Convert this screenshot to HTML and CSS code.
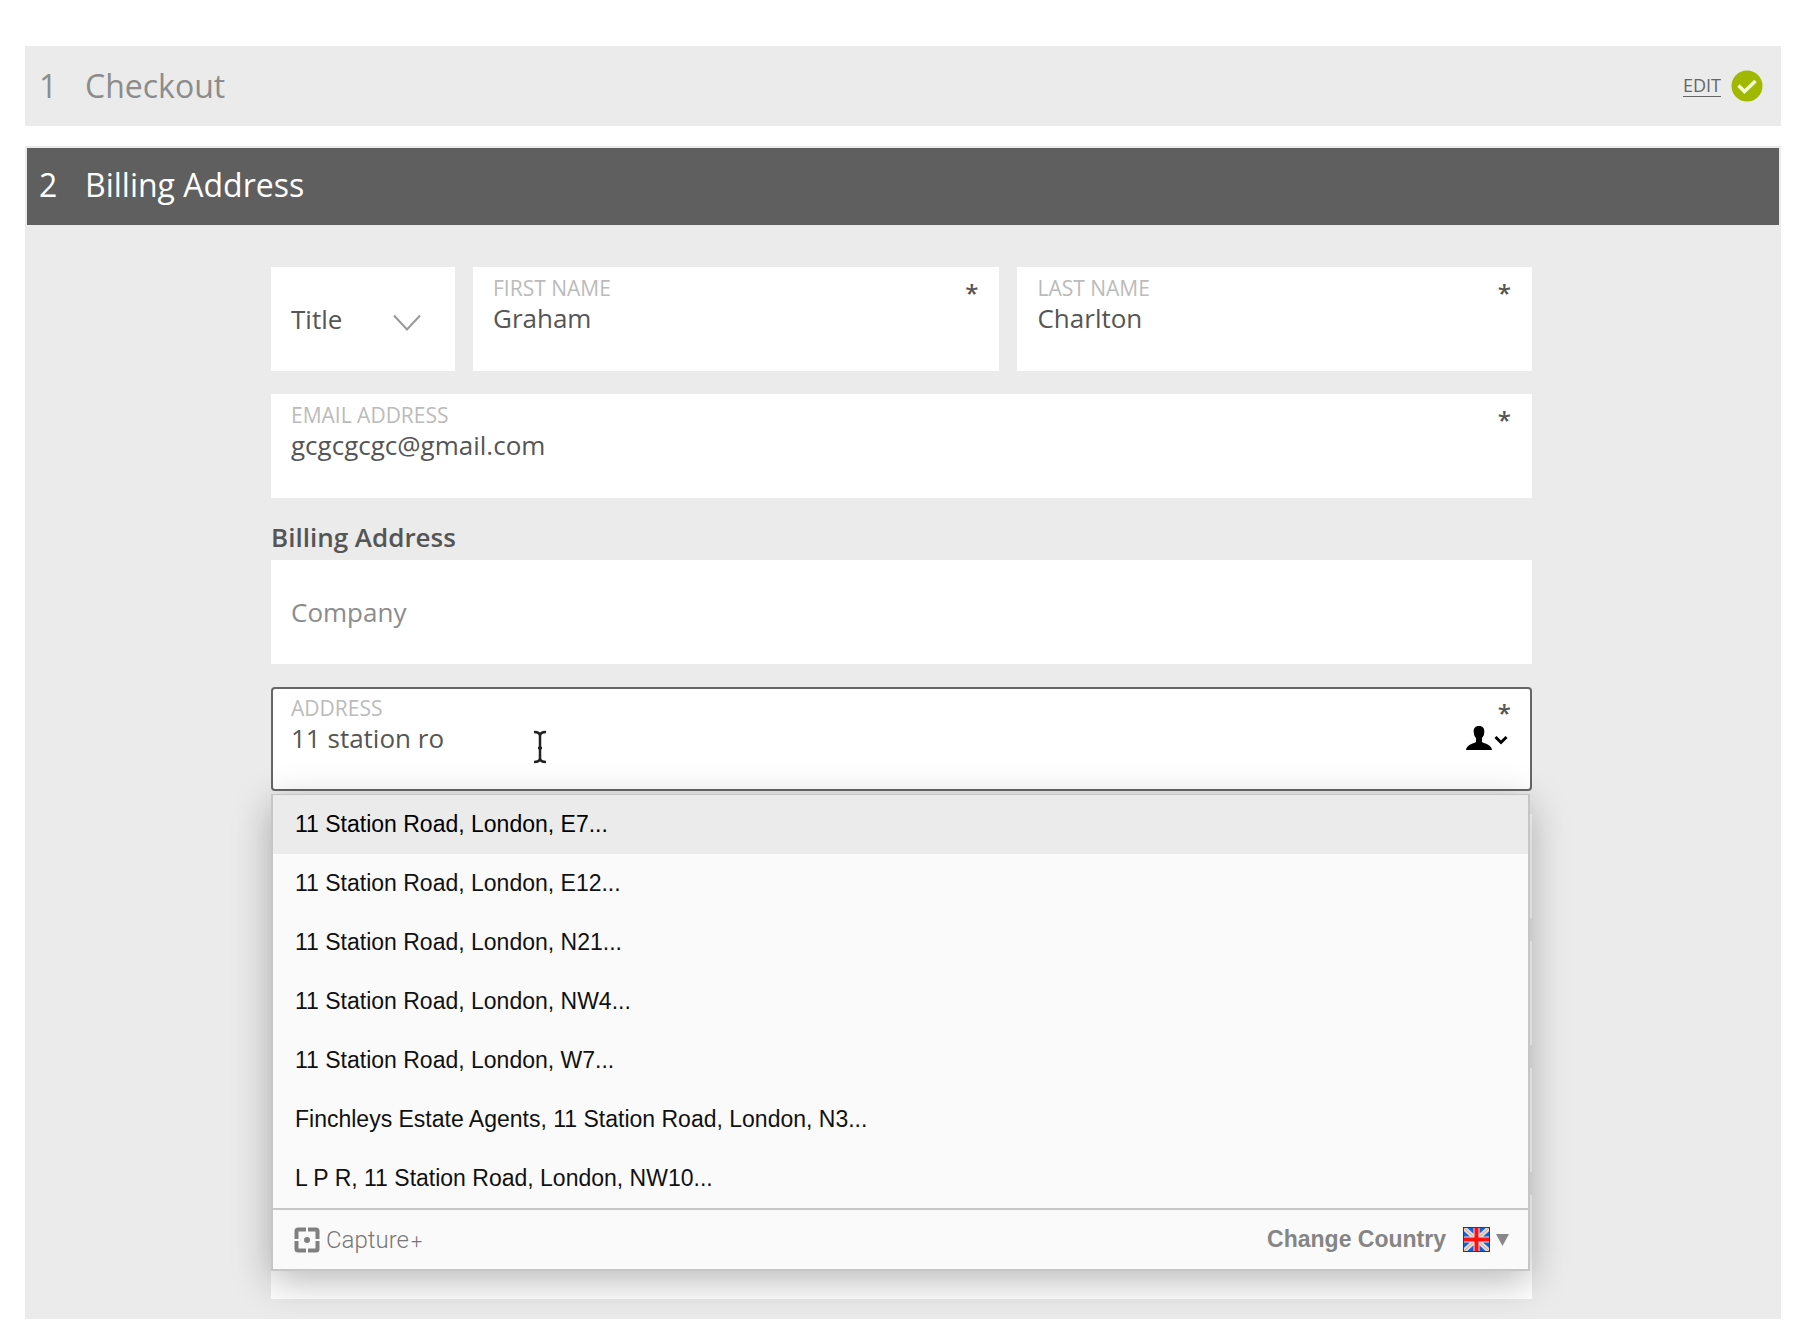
FILE: index.html
```html
<!DOCTYPE html>
<html lang="en">
<head>
    <meta charset="UTF-8">
    <meta name="viewport" content="width=device-width, initial-scale=1.0">
    <title>Checkout - Billing Address</title>
    <link rel="stylesheet" href="styles.css">
</head>
<body>

<main class="checkout">
    <section class="step step-done">
        <h2 class="step-title"><span class="step-number">1</span>Checkout</h2>
        <a class="edit-link" href="#">EDIT</a>
        <svg class="tick" viewBox="0 0 32 32" aria-hidden="true">
            <circle cx="16" cy="16" r="15.5" fill="#a0b800"/>
            <path d="M7.500 15.500l6 6L24.500 11" fill="none" stroke="#f4f7df" stroke-width="3.500"/>
        </svg>
    </section>

    <section class="step-open">
        <h2 class="step-title step-active"><span class="step-number">2</span>Billing Address</h2>

        <form class="billing-form">
            <div class="name-row">
                <div class="select-box">
                    <select id="title" name="title" aria-label="Title">
                        <option>Title</option>
                        <option>Mr</option>
                        <option>Mrs</option>
                        <option>Miss</option>
                        <option>Ms</option>
                    </select>
                    <svg class="chevron" viewBox="0 0 28 18" aria-hidden="true">
                        <path d="M1 1.500l13 14 13-14" fill="none" stroke="#999" stroke-width="2"/>
                    </svg>
                </div>
                <div class="field">
                    <label for="first-name">FIRST NAME</label>
                    <input type="text" id="first-name" name="first-name" value="Graham">
                    <span class="required">*</span>
                </div>
                <div class="field">
                    <label for="last-name">LAST NAME</label>
                    <input type="text" id="last-name" name="last-name" value="Charlton">
                    <span class="required">*</span>
                </div>
            </div>

            <div class="field">
                <label for="email">EMAIL ADDRESS</label>
                <input type="email" id="email" name="email" value="gcgcgcgc@gmail.com">
                <span class="required">*</span>
            </div>

            <h3 class="group-title">Billing Address</h3>

            <div class="field field-empty">
                <input type="text" id="company" name="company" placeholder="Company" aria-label="Company">
            </div>

            <div class="address">
                <div class="field field-focus">
                    <label for="address">ADDRESS</label>
                    <input type="text" id="address" name="address" value="11 station ro" autocomplete="off">
                    <span class="required">*</span>
                    <svg class="contact-icon" viewBox="0 0 42 24" aria-hidden="true">
                        <path d="M13 0c4 0 5.500 2.500 5.300 6-.1 2.500-.8 4.600-2.300 6v4c1 1.500 9.500 2 10 8H0c.5-6 9-6.500 10-8v-4c-1.500-1.400-2.200-3.500-2.300-6C7.500 2.500 9 0 13 0z" fill="#000"/>
                        <path d="M29.500 11l5.500 5.500L40.500 11" fill="none" stroke="#000" stroke-width="3"/>
                    </svg>
                    <svg class="text-cursor" viewBox="0 0 14 34" aria-hidden="true">
                        <path d="M1 2c3.500 0 6 1 6 4 0-3 2.500-4 6-4M7 6v22M1 32c3.500 0 6-1 6-4 0 3 2.500 4 6 4M5 18h4" fill="none" stroke="#222" stroke-width="2.500"/>
                    </svg>
                </div>

                <div class="suggestions">
                    <ul class="suggestion-list">
                        <li class="selected">11 Station Road, London, E7...</li>
                        <li>11 Station Road, London, E12...</li>
                        <li>11 Station Road, London, N21...</li>
                        <li>11 Station Road, London, NW4...</li>
                        <li>11 Station Road, London, W7...</li>
                        <li>Finchleys Estate Agents, 11 Station Road, London, N3...</li>
                        <li>L P R, 11 Station Road, London, NW10...</li>
                    </ul>
                    <div class="suggestion-footer">
                        <svg class="capture-icon" viewBox="0 0 26 26" aria-hidden="true">
                            <path d="M12 2.500H4A1.500 1.500 0 0 0 2.500 4v8M14 2.500h8A1.500 1.500 0 0 1 23.500 4v8M2.500 14v8A1.500 1.500 0 0 0 4 23.500h8M23.500 14v8a1.500 1.500 0 0 1-1.500 1.500h-8" fill="none" stroke="#808080" stroke-width="4"/>
                            <circle cx="13" cy="13" r="3" fill="#808080"/>
                        </svg>
                        <span class="capture-name">Capture<small>+</small></span>
                        <button type="button" class="country-button">
                            Change Country
                            <svg class="flag" viewBox="0 0 27 25" aria-hidden="true">
                                <rect width="27" height="25" fill="#1560d8"/>
                                <path d="M1 1l25 23M26 1L1 24" stroke="#e3dbd6" stroke-width="4.500"/>
                                <path d="M1 1l25 23M26 1L1 24" stroke="#d9a08a" stroke-width="1"/>
                                <path d="M13.500 1v23M1 12.500h25" stroke="#f6dcd8" stroke-width="6"/>
                                <path d="M13.500 1v23M1 12.500h25" stroke="#f11" stroke-width="4"/>
                                <rect x=".5" y=".5" width="26" height="24" fill="none" stroke="#1a3f86"/>
                            </svg>
                            <svg class="arrow" viewBox="0 0 13 12" aria-hidden="true">
                                <path d="M0 0h13L6.500 12z" fill="#888"/>
                            </svg>
                        </button>
                    </div>
                </div>
            </div>

            <!-- remaining fields, under the suggestion list -->
            <div class="field"></div>
            <div class="field"></div>
            <div class="field"></div>
            <div class="field"></div>
        </form>
    </section>
</main>

</body>
</html>
```
FILE: styles.css
```css
* {
    box-sizing: border-box;
}

body {
    margin: 0;
    background-color: #fff;
    font-family: "Open Sans", "Noto Sans", sans-serif;
    color: #555;
}

.checkout {
    margin: 46px 19px 0 25px;
}

.step {
    display: flex;
    align-items: center;
    height: 80px;
    padding: 0 18px 0 14px;
    margin-bottom: 20px;
    background-color: #ebebeb;
}

.step-title {
    display: flex;
    align-items: center;
    flex: 1;
    margin: 0;
    font-size: 32px;
    font-weight: 400;
    line-height: 40px;
    color: #8c8c8c;
}

.step-number {
    width: 46px;
}

.edit-link {
    padding-bottom: 2px;
    font-size: 18px;
    line-height: 24px;
    color: #666;
    text-underline-offset: 4px;
}

.tick {
    width: 32px;
    height: 32px;
    margin-left: 10px;
}

.step-open {
    padding: 2px 2px 20px;
    background-color: #ebebeb;
}

.step-active {
    height: 77px;
    padding: 0 0 3px 12px;
    color: #fff;
    background-color: #5f5f5f;
}

.billing-form {
    display: flex;
    flex-direction: column;
    gap: 23px;
    margin: 42px 247px 0 244px;
}

.name-row {
    display: grid;
    grid-template-columns: 184px 527fr 515fr;
    gap: 18px;
}

.field,
.select-box {
    position: relative;
    height: 104px;
    background-color: #fff;
}

.field {
    padding: 9px 20px;
}

.field label {
    display: block;
    font-size: 21px;
    line-height: 24px;
    color: #bbb;
}

.field input {
    display: block;
    width: 90%;
    padding: 0;
    border: 0;
    outline: 0;
    font: inherit;
    font-size: 26px;
    line-height: 36px;
    color: #555;
    background: transparent;
}

.field input::placeholder {
    color: #8c8c8c;
    opacity: 1;
}

.field-empty {
    display: flex;
    align-items: center;
}

.required {
    position: absolute;
    top: 10px;
    right: 21px;
    font-size: 24px;
    font-weight: 600;
    line-height: 32px;
}

.select-box select {
    width: 100%;
    height: 100%;
    padding: 0 20px;
    border: 0;
    appearance: none;
    font: inherit;
    font-size: 26px;
    color: #555;
    background: transparent;
}

.chevron {
    position: absolute;
    top: 47px;
    right: 34px;
    width: 28px;
    height: 18px;
    pointer-events: none;
}

.group-title {
    margin: 0 0 -23px;
    padding-bottom: 7px;
    font-size: 26px;
    font-weight: 600;
    line-height: 32px;
}

.address {
    position: relative;
}

.field-focus {
    padding: 7px 18px;
    border: 2px solid #666;
    border-radius: 4px;
}

.field-focus .required {
    top: 8px;
    right: 19px;
}

.contact-icon {
    position: absolute;
    top: 37px;
    right: 22px;
    width: 42px;
    height: 24px;
}

.text-cursor {
    position: absolute;
    top: 41px;
    left: 260px;
    width: 14px;
    height: 34px;
}

/* suggestion menu */
.suggestions {
    position: absolute;
    top: 107px;
    left: 0;
    right: 2px;
    z-index: 1;
    border: 2px solid #c6c6c6;
    border-top-width: 1px;
    background-color: #fafafa;
    box-shadow: 0 10px 36px rgba(0, 0, 0, 0.28);
    font-family: "Liberation Sans", Arial, sans-serif;
    font-size: 23px;
}

.suggestion-list {
    margin: 0;
    padding: 0;
    list-style: none;
}

.suggestion-list li {
    padding-left: 22px;
    line-height: 59px;
    color: #111;
}

.suggestion-list .selected {
    color: #000;
    background-color: #ebebeb;
}

.suggestion-footer {
    display: flex;
    align-items: center;
    height: 61px;
    padding: 0 19px 0 21px;
    border-top: 2px solid #c6c6c6;
}

.capture-icon {
    width: 26px;
    height: 26px;
    margin-right: 6px;
}

.capture-name {
    flex: 1;
    font-family: Roboto, sans-serif;
    font-size: 24px;
    font-weight: 300;
    color: #777;
}

.capture-name small {
    margin-left: 2px;
    font-size: 20px;
}

.country-button {
    display: flex;
    align-items: center;
    padding: 0;
    border: 0;
    font: inherit;
    font-weight: 700;
    color: #858585;
    background: none;
    cursor: pointer;
}

.flag {
    width: 27px;
    height: 25px;
    margin: 0 6px 0 17px;
}

.arrow {
    width: 13px;
    height: 12px;
}
```
